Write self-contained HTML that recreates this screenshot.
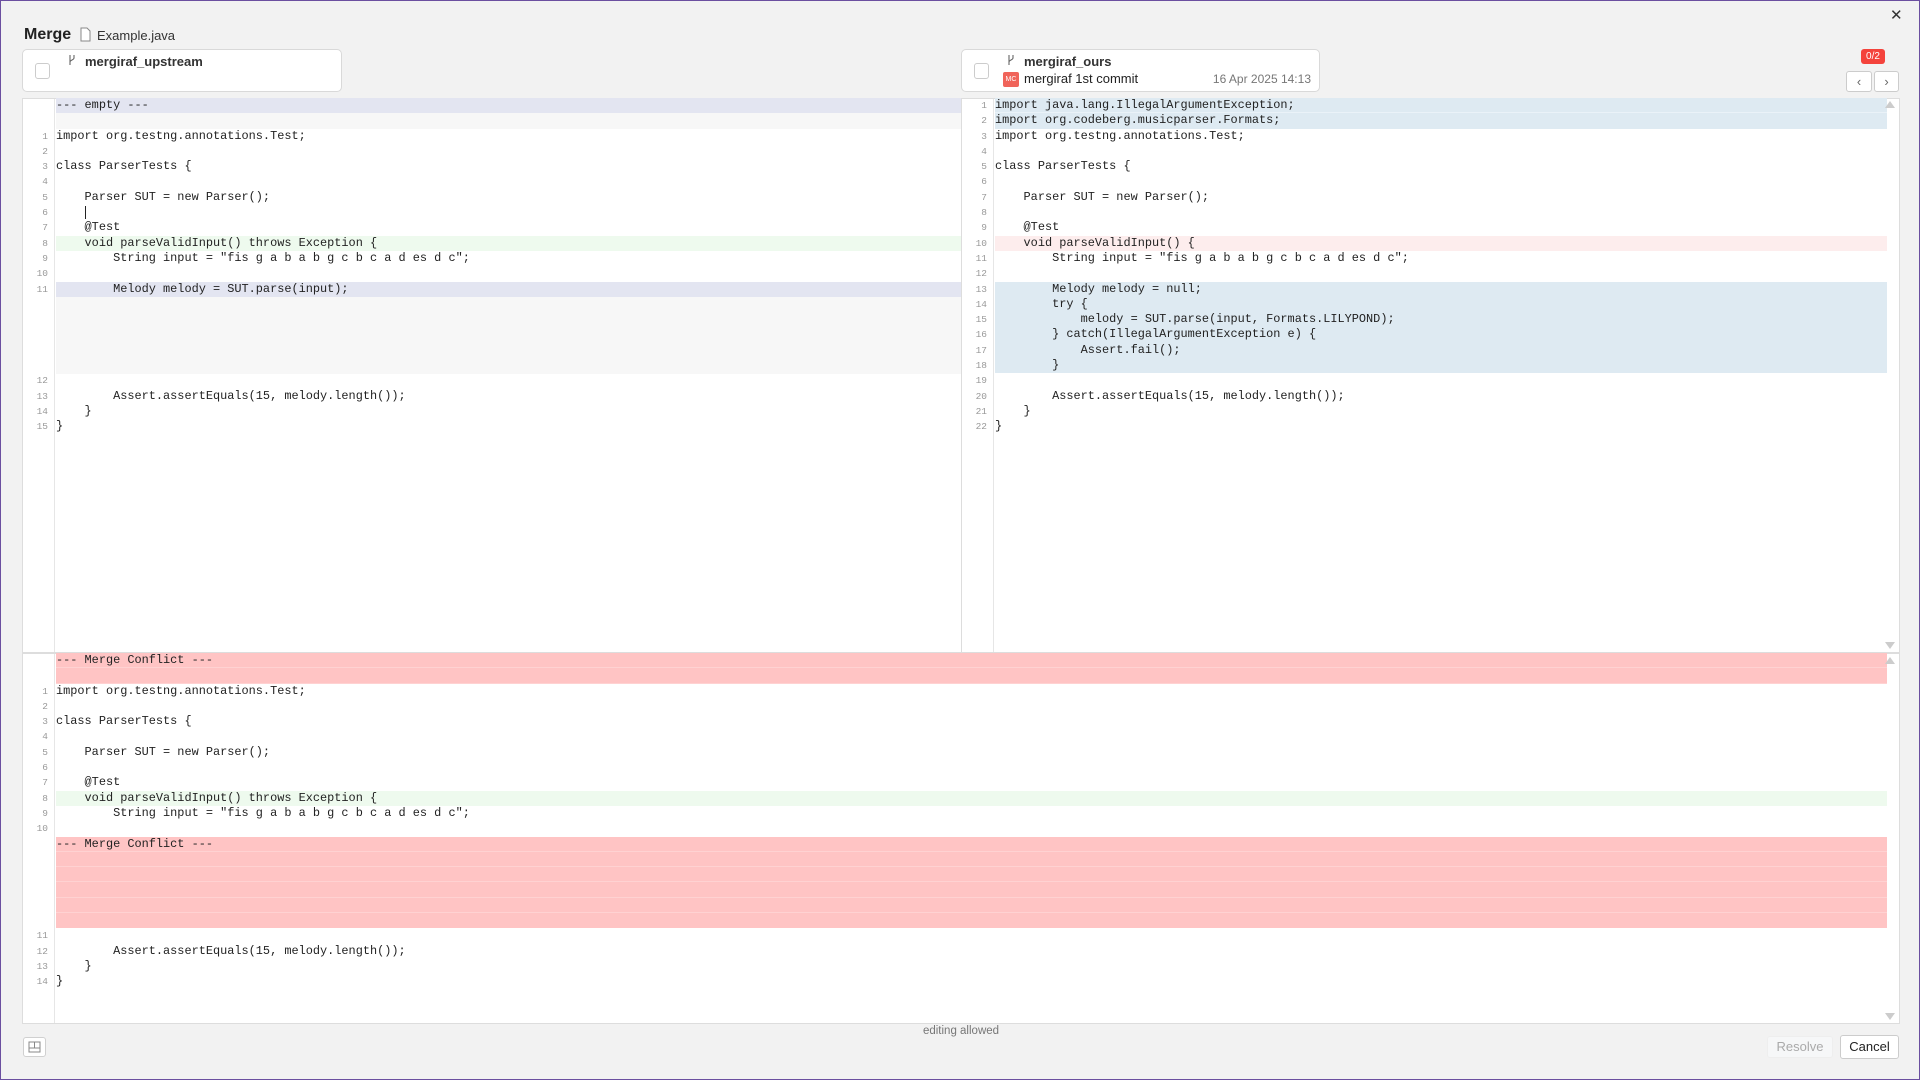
<!DOCTYPE html>
<html><head><meta charset="utf-8"><style>
*{box-sizing:border-box;margin:0;padding:0}
body{width:1920px;height:1080px;background:#f2f2f2;font-family:"Liberation Sans",sans-serif;position:relative;overflow:hidden;border:1px solid #6b4fa0}
.a{position:absolute}
.card{position:absolute;background:#fff;border:1px solid #d9d9d9;border-radius:5px}
.cb{position:absolute;width:15px;height:16px;border:1px solid #ccc;border-radius:3px;background:#fff}
.pane{position:absolute;background:#fff;border:1px solid #ddd}
.g{position:absolute;top:0;bottom:0;width:32px;border-right:1px solid #e6e6e6;background:#fff}
.rows{position:absolute;top:-1px;font-family:"Liberation Mono",monospace;font-size:11.9px;color:#222}
.r{height:15.3px;line-height:15.3px;white-space:pre;position:relative}
.n{position:absolute;width:25px;text-align:right;font-size:9.5px;color:#999}
.hd{background:#e3e5f1}.fl{background:#f7f7f7}.gr{background:#eefaee}.lv{background:#e3e5f1}.bl{background:#deeaf2}.rd{background:#fdeded}.pk{background:#ffc4c4;border-bottom:1px solid #ffd2d2}
.btn{position:absolute;border:1px solid #ccc;border-radius:3px;background:#fff;font-size:13px;text-align:center}
</style></head><body>
<div class="a" style="left:23px;top:25px;font-size:16px;font-weight:bold;color:#222">Merge</div>
<svg class="a" style="left:79px;top:26px" width="11" height="15"><path d="M1 1h6l3 3v10H1z" fill="#fff" stroke="#888"/></svg>
<div class="a" style="left:96px;top:27px;font-size:13px;color:#333">Example.java</div>
<div class="a" style="left:1889px;top:5px;font-size:15px;color:#333">✕</div>

<div class="card" style="left:21px;top:48px;width:320px;height:43px">
<div class="cb" style="left:12px;top:13px"></div>
<svg class="a" style="left:44px;top:4px" width="10" height="12"><path d="M3 1v10M7 1v3c0 2-4 2-4 4" fill="none" stroke="#666" stroke-width="1.1"/></svg>
<div class="a" style="left:62px;top:4px;font-size:13px;font-weight:bold;color:#333">mergiraf_upstream</div>
</div>
<div class="card" style="left:960px;top:48px;width:359px;height:43px">
<div class="cb" style="left:12px;top:13px"></div>
<svg class="a" style="left:44px;top:4px" width="10" height="12"><path d="M3 1v10M7 1v3c0 2-4 2-4 4" fill="none" stroke="#666" stroke-width="1.1"/></svg>
<div class="a" style="left:62px;top:4px;font-size:13px;font-weight:bold;color:#333">mergiraf_ours</div>
<div class="a" style="left:41px;top:22px;width:16px;height:15px;background:#f0645a;border-radius:2px;color:#fff;font-size:7px;line-height:15px;text-align:center">MC</div>
<div class="a" style="left:62px;top:21px;font-size:13px;color:#222">mergiraf 1st commit</div>
<div class="a" style="right:8px;top:22px;font-size:12px;color:#777">16 Apr 2025 14:13</div>
</div>
<div class="a" style="left:1860px;top:48px;width:24px;height:15px;background:#f4433c;border-radius:3px;color:#fff;font-size:10px;line-height:15px;text-align:center">0/2</div>
<div class="btn" style="left:1845px;top:70px;width:26px;height:21px;line-height:19px;color:#666">‹</div>
<div class="btn" style="left:1873px;top:70px;width:25px;height:21px;line-height:19px;color:#666">›</div>

<div class="pane" style="left:21px;top:97px;width:940px;height:555px">
<div class="g" style="left:0"></div>
<div class="rows" style="left:0;width:938px">
<div class="r"><span class="n"></span><div class="a hd" style="left:33px;right:0;top:0;bottom:0">--- empty ---</div></div>
<div class="r"><div class="a fl" style="left:33px;right:0;top:0;bottom:0"></div></div>
<div class="r"><span class="n">1</span><span class="a" style="left:33px">import org.testng.annotations.Test;</span></div>
<div class="r"><span class="n">2</span></div>
<div class="r"><span class="n">3</span><span class="a" style="left:33px">class ParserTests {</span></div>
<div class="r"><span class="n">4</span></div>
<div class="r"><span class="n">5</span><span class="a" style="left:33px">    Parser SUT = new Parser();</span></div>
<div class="r"><span class="n">6</span><span class="a" style="left:62px;top:1px;width:1px;height:13px;background:#222"></span></div>
<div class="r"><span class="n">7</span><span class="a" style="left:33px">    @Test</span></div>
<div class="r"><span class="n">8</span><div class="a gr" style="left:33px;right:0;top:0;bottom:0">    void parseValidInput() throws Exception {</div></div>
<div class="r"><span class="n">9</span><span class="a" style="left:33px">        String input = "fis g a b a b g c b c a d es d c";</span></div>
<div class="r"><span class="n">10</span></div>
<div class="r"><span class="n">11</span><div class="a lv" style="left:33px;right:0;top:0;bottom:0">        Melody melody = SUT.parse(input);</div></div>
<div class="a fl" style="left:33px;right:0;top:199px;height:76.5px"></div>
<div class="r"></div><div class="r"></div><div class="r"></div><div class="r"></div><div class="r"></div>
<div class="r"><span class="n">12</span></div>
<div class="r"><span class="n">13</span><span class="a" style="left:33px">        Assert.assertEquals(15, melody.length());</span></div>
<div class="r"><span class="n">14</span><span class="a" style="left:33px">    }</span></div>
<div class="r"><span class="n">15</span><span class="a" style="left:33px">}</span></div>
</div></div>

<div class="pane" style="left:960px;top:97px;width:939px;height:555px">
<div class="g" style="left:0"></div>
<div class="rows" style="left:0;width:925px">
<div class="r"><span class="n">1</span><div class="a bl" style="left:33px;right:0;top:0;bottom:0;border-bottom:1px solid #eaf2f8">import java.lang.IllegalArgumentException;</div></div>
<div class="r"><span class="n">2</span><div class="a bl" style="left:33px;right:0;top:0;bottom:0">import org.codeberg.musicparser.Formats;</div></div>
<div class="r"><span class="n">3</span><span class="a" style="left:33px">import org.testng.annotations.Test;</span></div>
<div class="r"><span class="n">4</span></div>
<div class="r"><span class="n">5</span><span class="a" style="left:33px">class ParserTests {</span></div>
<div class="r"><span class="n">6</span></div>
<div class="r"><span class="n">7</span><span class="a" style="left:33px">    Parser SUT = new Parser();</span></div>
<div class="r"><span class="n">8</span></div>
<div class="r"><span class="n">9</span><span class="a" style="left:33px">    @Test</span></div>
<div class="r"><span class="n">10</span><div class="a rd" style="left:33px;right:0;top:0;bottom:0">    void parseValidInput() {</div></div>
<div class="r"><span class="n">11</span><span class="a" style="left:33px">        String input = "fis g a b a b g c b c a d es d c";</span></div>
<div class="r"><span class="n">12</span></div>
<div class="r"><span class="n">13</span><div class="a bl" style="left:33px;right:0;top:0;bottom:0">        Melody melody = null;</div></div>
<div class="r"><span class="n">14</span><div class="a bl" style="left:33px;right:0;top:0;bottom:0">        try {</div></div>
<div class="r"><span class="n">15</span><div class="a bl" style="left:33px;right:0;top:0;bottom:0">            melody = SUT.parse(input, Formats.LILYPOND);</div></div>
<div class="r"><span class="n">16</span><div class="a bl" style="left:33px;right:0;top:0;bottom:0">        } catch(IllegalArgumentException e) {</div></div>
<div class="r"><span class="n">17</span><div class="a bl" style="left:33px;right:0;top:0;bottom:0">            Assert.fail();</div></div>
<div class="r"><span class="n">18</span><div class="a bl" style="left:33px;right:0;top:0;bottom:0">        }</div></div>
<div class="r"><span class="n">19</span></div>
<div class="r"><span class="n">20</span><span class="a" style="left:33px">        Assert.assertEquals(15, melody.length());</span></div>
<div class="r"><span class="n">21</span><span class="a" style="left:33px">    }</span></div>
<div class="r"><span class="n">22</span><span class="a" style="left:33px">}</span></div>
</div>
<div class="a" style="right:4px;top:2px;width:0;height:0;border:5px solid transparent;border-bottom:7px solid #ccc;border-top:0"></div>
<div class="a" style="right:4px;bottom:3px;width:0;height:0;border:5px solid transparent;border-top:7px solid #ccc;border-bottom:0"></div>
</div>

<div class="pane" style="left:21px;top:652px;width:1878px;height:371px">
<div class="g" style="left:0"></div>
<div class="rows" style="left:0;width:1864px">
<div class="r"><div class="a pk" style="left:33px;right:0;top:0;bottom:0">--- Merge Conflict ---</div></div>
<div class="r"><div class="a pk" style="left:33px;right:0;top:0;bottom:0"></div></div>
<div class="r"><span class="n">1</span><span class="a" style="left:33px">import org.testng.annotations.Test;</span></div>
<div class="r"><span class="n">2</span></div>
<div class="r"><span class="n">3</span><span class="a" style="left:33px">class ParserTests {</span></div>
<div class="r"><span class="n">4</span></div>
<div class="r"><span class="n">5</span><span class="a" style="left:33px">    Parser SUT = new Parser();</span></div>
<div class="r"><span class="n">6</span></div>
<div class="r"><span class="n">7</span><span class="a" style="left:33px">    @Test</span></div>
<div class="r"><span class="n">8</span><div class="a gr" style="left:33px;right:0;top:0;bottom:0">    void parseValidInput() throws Exception {</div></div>
<div class="r"><span class="n">9</span><span class="a" style="left:33px">        String input = "fis g a b a b g c b c a d es d c";</span></div>
<div class="r"><span class="n">10</span></div>
<div class="r"><div class="a pk" style="left:33px;right:0;top:0;bottom:0">--- Merge Conflict ---</div></div>
<div class="r"><div class="a pk" style="left:33px;right:0;top:0;bottom:0"></div></div>
<div class="r"><div class="a pk" style="left:33px;right:0;top:0;bottom:0"></div></div>
<div class="r"><div class="a pk" style="left:33px;right:0;top:0;bottom:0"></div></div>
<div class="r"><div class="a pk" style="left:33px;right:0;top:0;bottom:0"></div></div>
<div class="r"><div class="a pk" style="left:33px;right:0;top:0;bottom:0;border:0"></div></div>
<div class="r"><span class="n">11</span></div>
<div class="r"><span class="n">12</span><span class="a" style="left:33px">        Assert.assertEquals(15, melody.length());</span></div>
<div class="r"><span class="n">13</span><span class="a" style="left:33px">    }</span></div>
<div class="r"><span class="n">14</span><span class="a" style="left:33px">}</span></div>
</div>
<div class="a" style="right:4px;top:3px;width:0;height:0;border:5px solid transparent;border-bottom:7px solid #ccc;border-top:0"></div>
<div class="a" style="right:4px;bottom:3px;width:0;height:0;border:5px solid transparent;border-top:7px solid #ccc;border-bottom:0"></div>
</div>

<div class="btn" style="left:22px;top:1036px;width:23px;height:20px;border-color:#d0d0d0"><svg width="21" height="18"><rect x="5" y="4" width="11" height="10" fill="none" stroke="#888"/><path d="M5 10h11M10.5 4v6" stroke="#888"/></svg></div>
<div class="a" style="left:0;width:1920px;top:1024px;text-align:center;font-size:11.5px;color:#777">editing allowed</div>
<div class="btn" style="left:1766px;top:1035px;width:66px;height:22px;line-height:20px;color:#aaa;background:#f6f7f8;border-color:#eee">Resolve</div>
<div class="btn" style="left:1839px;top:1034px;width:59px;height:24px;line-height:22px;color:#222">Cancel</div>
</body></html>
